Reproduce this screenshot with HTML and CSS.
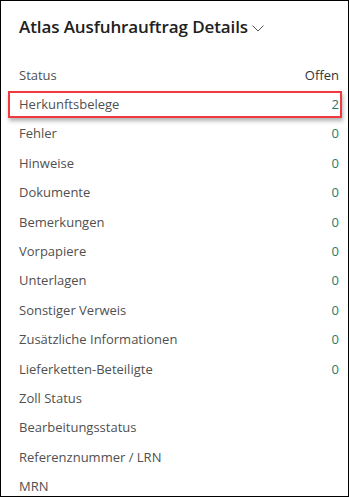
FILE: index.html
```html
<!DOCTYPE html>
<html lang="de">
<head>
    <meta charset="UTF-8">
    <title>Atlas Ausfuhrauftrag Details</title>
    <link rel="stylesheet" href="styles.css">
</head>
<body>
    <div class="panel">
        <div class="header">
            <span class="title">Atlas Ausfuhrauftrag Details</span>
            <svg class="chevron" width="12" height="7" viewBox="0 0 12 7">
                <path d="M0.5 0.5 L6 6 L11.5 0.5" fill="none" stroke="#555" stroke-width="1"/>
            </svg>
        </div>
        <div class="list">
            <div class="row"><span>Status</span><span class="value plain">Offen</span></div>
            <div class="row highlight"><span>Herkunftsbelege</span><span class="value">2</span></div>
            <div class="row"><span>Fehler</span><span class="value">0</span></div>
            <div class="row"><span>Hinweise</span><span class="value">0</span></div>
            <div class="row"><span>Dokumente</span><span class="value">0</span></div>
            <div class="row"><span>Bemerkungen</span><span class="value">0</span></div>
            <div class="row"><span>Vorpapiere</span><span class="value">0</span></div>
            <div class="row"><span>Unterlagen</span><span class="value">0</span></div>
            <div class="row"><span>Sonstiger Verweis</span><span class="value">0</span></div>
            <div class="row"><span>Zusätzliche Informationen</span><span class="value">0</span></div>
            <div class="row"><span>Lieferketten-Beteiligte</span><span class="value">0</span></div>
            <div class="row"><span>Zoll Status</span></div>
            <div class="row"><span>Bearbeitungsstatus</span></div>
            <div class="row"><span>Referenznummer / LRN</span></div>
            <div class="row"><span>MRN</span></div>
        </div>
    </div>
</body>
</html>
```
FILE: styles.css
```css
body {
    margin: 0;
    font-family: "Open Sans", "Noto Sans", Arial, sans-serif;
    background-color: #fff;
}
.panel {
    width: 349px;
    height: 497px;
    box-sizing: border-box;
    border: 1px solid #000;
    overflow: hidden;
    background-color: #fff;
}
.header {
    display: flex;
    align-items: center;
    padding: 14px 0 0 18px;
    line-height: 23px;
}
.title {
    font-size: 17px;
    font-weight: 600;
    color: #212121;
    letter-spacing: -0.1px;
}
.chevron {
    margin-left: 4px;
    margin-top: 4px;
}
.list {
    margin: 22px 6px 0 7px;
}
.row {
    display: flex;
    justify-content: space-between;
    align-items: center;
    height: 29.4px;
    box-sizing: border-box;
    padding: 0 3px 0 11px;
    font-size: 13px;
    color: #505050;
}
.value {
    color: #1f7a6e;
}
.value.plain {
    color: #333;
}
.highlight {
    height: 27px;
    margin: 1.2px 0;
    border: 2px solid #f0393f;
    padding: 0 1px 0 9px;
    box-shadow: 1px 3px 4px rgba(0, 0, 0, 0.3);
}
```
